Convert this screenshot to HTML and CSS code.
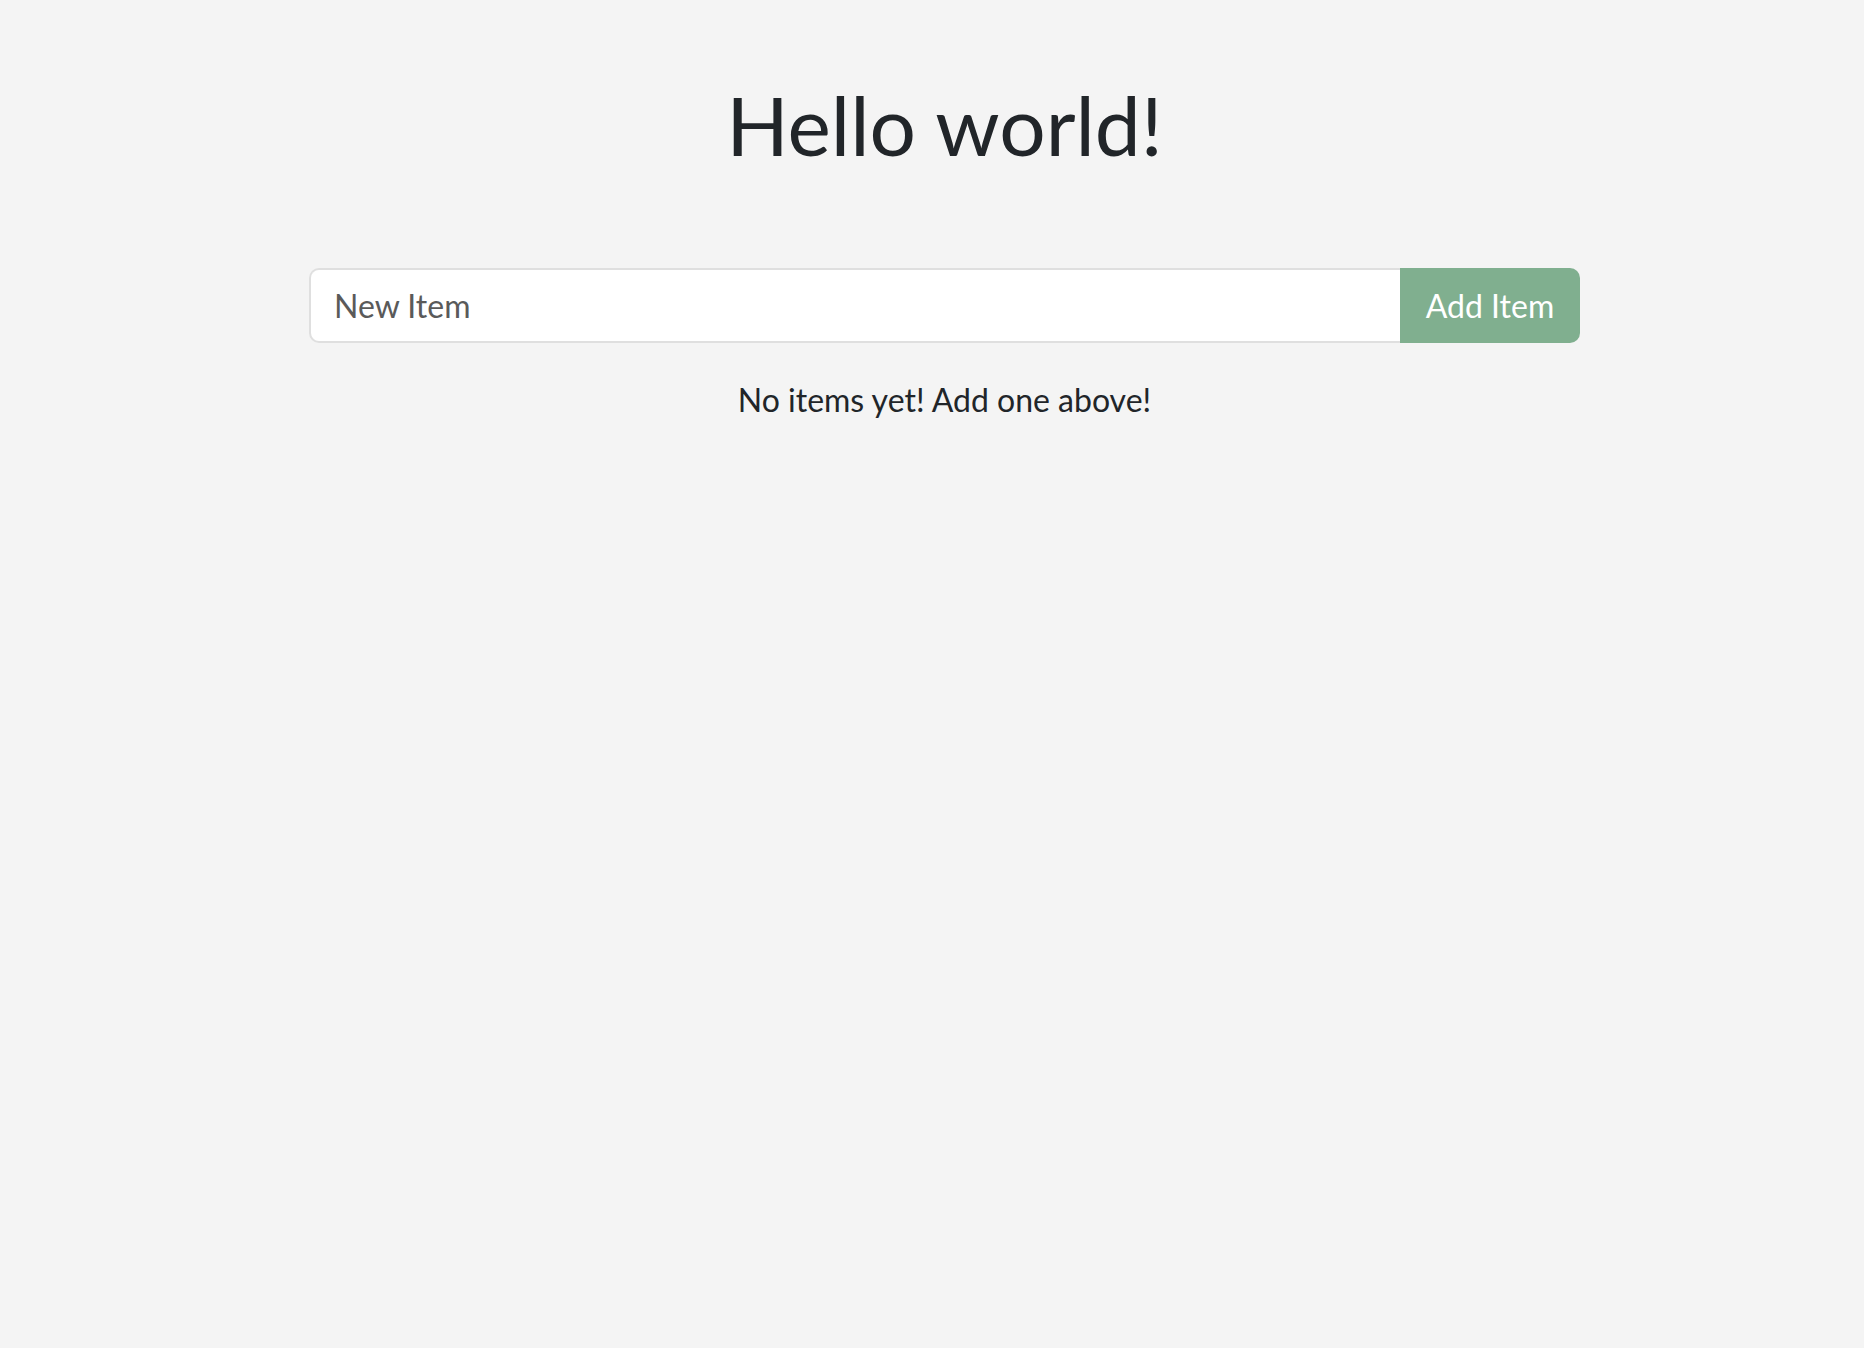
FILE: index.html
```html
<!DOCTYPE html>
<html lang="en">
<head>
<meta charset="utf-8">
<title>Hello world!</title>
<link rel="stylesheet" href="styles.css">
</head>
<body>
<main class="app">
  <h1 class="title">Hello world!</h1>
  <form class="add-form">
    <input class="item-input" type="text" placeholder="New Item">
    <button class="add-btn" type="button">Add Item</button>
  </form>
  <p class="empty">No items yet! Add one above!</p>
</main>
</body>
</html>
```
FILE: styles.css
```css
html, body {
  margin: 0;
  padding: 0;
  background: #f4f4f4;
}
body {
  font-family: Lato, "Liberation Sans", sans-serif;
  color: #212529;
  min-height: 1348px;
}
.app {
  width: 1271px;
  margin-left: 309px;
  display: flex;
  flex-direction: column;
  align-items: center;
}
.title {
  margin: 75px 0 0;
  font-size: 82px;
  font-weight: 400;
  line-height: 1.2;
}
.add-form {
  margin-top: 95px;
  display: flex;
  width: 100%;
  height: 75px;
}
.item-input {
  flex: 1;
  min-width: 0;
  box-sizing: border-box;
  height: 75px;
  border: 2px solid #dfdfdf;
  border-right: none;
  border-radius: 10px 0 0 10px;
  background: #fff;
  padding: 0 23px;
  font-family: Lato, "Liberation Sans", sans-serif;
  font-size: 32px;
  color: #212529;
  outline: none;
}
.item-input::placeholder {
  color: #5a5a5a;
  opacity: 1;
}
.add-btn {
  width: 180px;
  height: 75px;
  border: none;
  border-radius: 0 10px 10px 0;
  background: #80af8f;
  color: #fff;
  font-family: Lato, "Liberation Sans", sans-serif;
  font-size: 32px;
  padding: 0;
}
.empty {
  margin: 33px 0 0;
  font-size: 32px;
  line-height: 1.5;
}
```
